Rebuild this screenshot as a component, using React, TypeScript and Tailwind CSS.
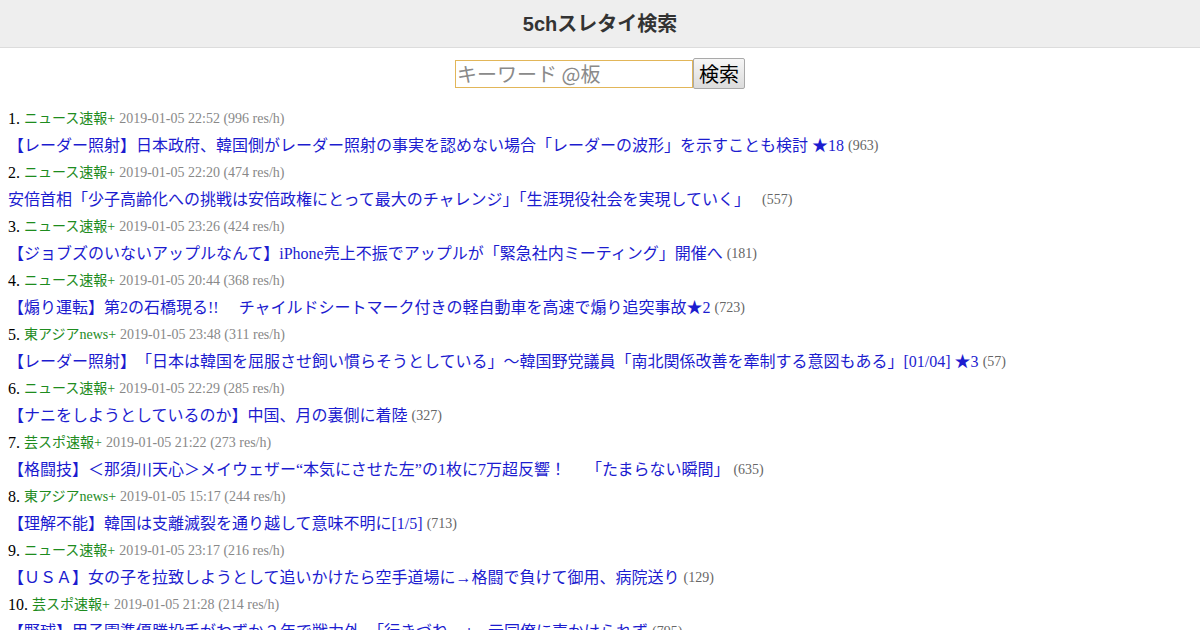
import React from "react";

const items = [
  { board: "ニュース速報+", date: "2019-01-05 22:52", rate: "996", title: "【レーダー照射】日本政府、韓国側がレーダー照射の事実を認めない場合「レーダーの波形」を示すことも検討 ★18", count: "963" },
  { board: "ニュース速報+", date: "2019-01-05 22:20", rate: "474", title: "安倍首相「少子高齢化への挑戦は安倍政権にとって最大のチャレンジ」「生涯現役社会を実現していく」　", count: "557" },
  { board: "ニュース速報+", date: "2019-01-05 23:26", rate: "424", title: "【ジョブズのいないアップルなんて】iPhone売上不振でアップルが「緊急社内ミーティング」開催へ", count: "181" },
  { board: "ニュース速報+", date: "2019-01-05 20:44", rate: "368", title: "【煽り運転】第2の石橋現る!!　 チャイルドシートマーク付きの軽自動車を高速で煽り追突事故★2", count: "723" },
  { board: "東アジアnews+", date: "2019-01-05 23:48", rate: "311", title: "【レーダー照射】　「日本は韓国を屈服させ飼い慣らそうとしている」～韓国野党議員「南北関係改善を牽制する意図もある」[01/04] ★3", count: "57" },
  { board: "ニュース速報+", date: "2019-01-05 22:29", rate: "285", title: "【ナニをしようとしているのか】中国、月の裏側に着陸", count: "327" },
  { board: "芸スポ速報+", date: "2019-01-05 21:22", rate: "273", title: "【格闘技】＜那須川天心＞メイウェザー“本気にさせた左”の1枚に7万超反響！　 「たまらない瞬間」", count: "635" },
  { board: "東アジアnews+", date: "2019-01-05 15:17", rate: "244", title: "【理解不能】韓国は支離滅裂を通り越して意味不明に[1/5]", count: "713" },
  { board: "ニュース速報+", date: "2019-01-05 23:17", rate: "216", title: "【ＵＳＡ】女の子を拉致しようとして追いかけたら空手道場に→格闘で負けて御用、病院送り", count: "129" },
  { board: "芸スポ速報+", date: "2019-01-05 21:28", rate: "214", title: "【野球】甲子園準優勝投手がわずか２年で戦力外　「行きづね…」　元同僚に声かけられず", count: "795" },
];

export default function App() {
  return (
    <div
      className="min-h-[630px] bg-white text-black"
      style={{ fontFamily: '"Liberation Serif", "Noto Sans CJK JP", serif' }}
    >
      <header className="h-[48px] bg-[#eeeeee] border-b border-[#dcdcdc] flex items-center justify-center">
        <h1
          className="text-[20px] font-bold text-[#333333]"
          style={{ fontFamily: '"Liberation Sans", "Noto Sans CJK JP", sans-serif' }}
        >
          5chスレタイ検索
        </h1>
      </header>
      <div className="flex justify-center items-center pt-[10px]">
        <input
          type="text"
          placeholder="キーワード @板"
          className="w-[238px] h-[28px] border border-[#e2b659] outline-none text-[20px] px-[1px] placeholder:text-[#8a8a8a]"
          style={{ fontFamily: '"Noto Sans CJK JP", sans-serif' }}
        />
        <button
          className="h-[31px] px-[5px] text-[20px] border border-[#a9a9a9] rounded-[2px] bg-gradient-to-b from-[#f6f6f6] to-[#dcdcdc] leading-none"
          style={{ fontFamily: '"Noto Sans CJK JP", sans-serif' }}
        >
          検索
        </button>
      </div>
      <ol className="pl-[8px] pt-[16px]">
        {items.map((it, i) => (
          <li key={i} className="leading-[26px]">
            <div className="h-[27px] flex items-end gap-[4px] text-[16px]">
              <span>{i + 1}.</span>
              <span className="text-[14px] text-[#1e8c1e]">{it.board}</span>
              <span className="text-[14px] text-[#888888]">
                {it.date} ({it.rate} res/h)
              </span>
            </div>
            <div className="h-[27px] flex items-end whitespace-pre text-[16px]">
              <span className="text-[#1c1ccf]">{it.title}</span>
              <span className="text-[14px] text-[#666666] ml-[4px]">({it.count})</span>
            </div>
          </li>
        ))}
      </ol>
    </div>
  );
}
